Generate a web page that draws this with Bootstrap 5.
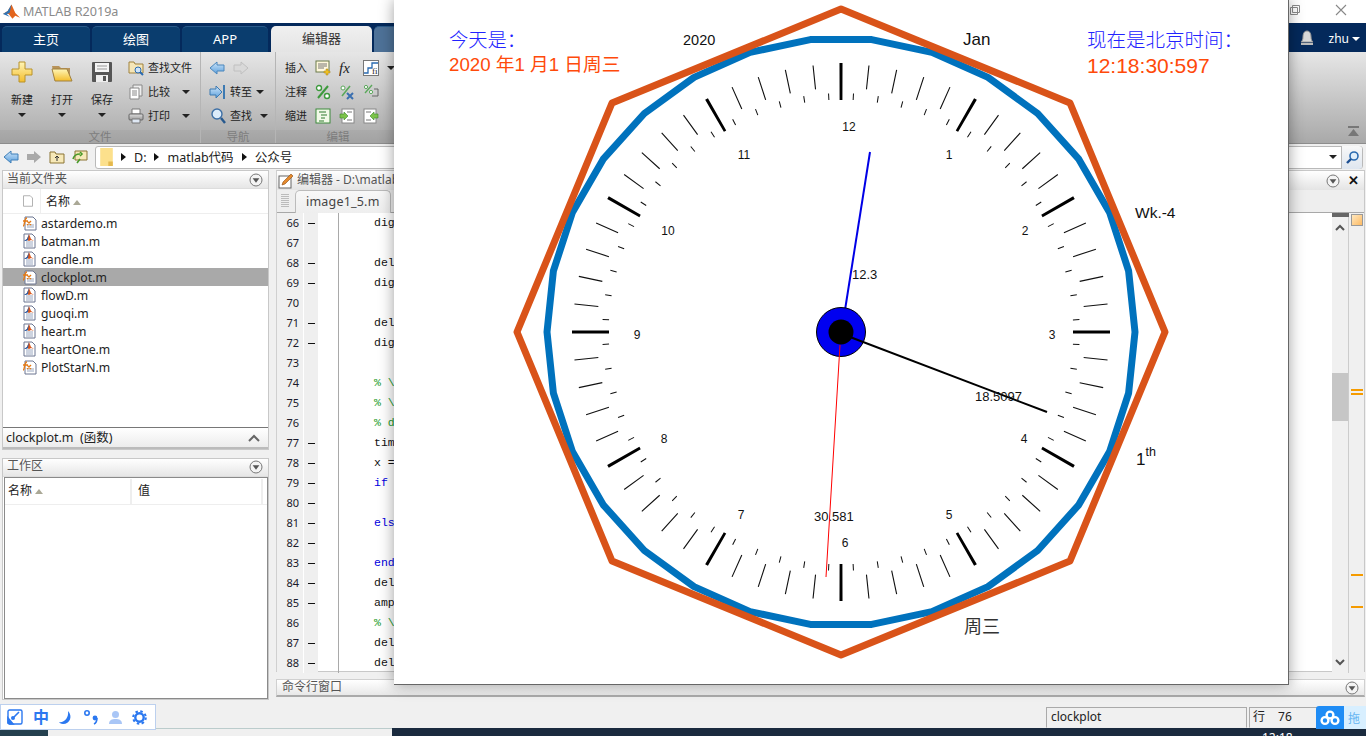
<!DOCTYPE html>
<html lang="zh-CN">
<head>
<meta charset="utf-8">
<title>MATLAB R2019a</title>
<link href="https://cdn.jsdelivr.net/npm/bootstrap@5.3.0/dist/css/bootstrap.min.css" rel="stylesheet">
<style>
html,body{margin:0;height:736px;overflow:hidden;background:#f0f0f0}
body{font-family:"Noto Sans","Noto Sans CJK SC",sans-serif;font-size:12px;color:#222;line-height:1.2}
.shell{width:1366px;height:736px;overflow:hidden;position:relative}
.ttl{height:23px;background:#fff;color:#8a8a8a;font-size:12.6px;padding-left:2px}
.ttl svg{margin-right:2px}
.ctl-a{position:absolute;left:1289px;top:3px}
.ctl-b{position:absolute;left:1334px;top:3px}
.tabbar{height:29px;background:#04295b;padding:3px 0 0 2px;gap:2px;color:#fff;font-size:13px}
.tb{width:88px;height:26px;background:#0a3d6e;border-radius:5px 5px 0 0;border-top:1px solid #2a5b8a}
.tb-w{width:86px}
.tb-on{width:101px;margin-left:1px;background:linear-gradient(#f0f0f0,#e4e4e4);color:#333;border:0}
.tb-x{width:120px;background:#4e7298}
.tab-sp{flex:1}
.srchend{width:6px;height:24px;background:#fff;border-radius:0 3px 3px 0;margin-right:9px}
.bell{margin-right:13px}
.usr{margin-right:6px;font-size:12px}
.tri{display:inline-block;width:0;height:0;border-left:4px solid transparent;border-right:4px solid transparent;border-top:4px solid #222}
.tri-w{border-top-color:#fff;margin-left:3px;vertical-align:2px}
.ribbon{height:92px;background:linear-gradient(#e6e6e6,#a9a9a9);border-bottom:1px solid #8d8d8d;position:relative}
.grp{border-right:1px solid #b5b5b5}
.g1{width:201px}.g2{width:75px}.g3{flex:1}
.rb-body{height:78px;padding-top:4px}
.rb-lbl{height:13px;line-height:13px;text-align:center;color:#7d7d7d;font-size:11.5px;background:rgba(0,0,0,.035)}
.g3lbl{width:124px}
.rb-min{position:absolute;left:1348px;top:74px}
.bigb{width:40px;font-size:11px}
.bigb svg{margin-top:5px}
.bigb span.t{margin-top:9px;height:16px;line-height:16px}
.bigb .tri{margin-top:5px}
.bigs{padding-left:2px}
.smc{margin-left:6px}
.rw{height:24px;gap:4px;font-size:11px;white-space:nowrap}
.rw .tri{margin-left:8px}
.g2 .rb-body{padding-left:8px}
.gap8{gap:8px}
.rw-n .tri{margin-left:0}
.rw-f .tri{margin-left:4px}
.ind2{margin-left:2px}
.g3 .rb-body{padding-left:9px}
.g3 .rw{gap:0}
.g3 .rw .tri{margin-left:0}
.g3 .lab{width:30px}
.g3 .ic{width:24px;display:flex}
.pathb{height:26px;background:#f0f0f0;padding:0 3px;gap:7px}
.pbox{flex:1;height:23px;background:#fff;border:1px solid #b9b9b9;border-radius:3px;font-size:12.5px;padding-left:4px;gap:8px}
.pbox .arr{width:0;height:0;border-top:4px solid transparent;border-bottom:4px solid transparent;border-left:5px solid #111}
.psp{flex:1}
.pdrop{margin-right:-4px}
.psrch{width:21px;height:23px;background:linear-gradient(#f8f8f8,#dfe6ef);border-left:1px solid #b9b9b9;border-radius:0 3px 3px 0}
.mainw{height:530px;gap:6px}
.leftc{width:270px;padding-left:2px;gap:8px;flex-shrink:0}
.rightc{width:1090px}
.pan{border:1px solid #c8c8c8;background:#fff;width:267px}
.p1{height:280px}.p2{height:242px}
.phead{height:18px;background:linear-gradient(#fff,#e6e6e6);font-size:12px;color:#555;padding:0 5px 0 4px;border-bottom:1px solid #ddd}
.p2 .phead{padding-bottom:2px}
.circ{margin-left:auto}
.colh{height:25px;border-bottom:1px solid #eee}
.colic{width:38px;height:24px;padding-left:19px;border-right:1px solid #eee;display:flex;align-items:center}
.colt{padding:2px 0 0 5px;font-size:12px;color:#222;gap:3px}
.up{display:inline-block;width:0;height:0;border-left:4px solid transparent;border-right:4px solid transparent;border-bottom:5px solid #aaa896}
.frow{height:18px;padding:3px 0 0 18px;gap:4px;font-size:12.2px;color:#222}
.frow svg{flex-shrink:0;margin-top:-3px}
.frow-on{background:#a9a9a9}
.fgrow{flex:1}
.pfn{height:22px;border-top:1px solid #777;background:linear-gradient(#fff,#ececec);border-bottom:2px solid #bbb;padding:0 8px 0 3px;font-size:12.5px}
.wk{flex:1;border:1px solid #8a8a8a;margin:0 0 0 1px}
.wkh{height:27px;border-bottom:1px solid #eee;padding-top:1px}
.wk1{width:127px;padding-left:3px;gap:3px;border-right:2px solid #eee}
.wk2{width:131px;padding-left:6px;border-right:2px solid #eee}
.edit{height:502px;border:1px solid #c8c8c8;border-left:1px solid #d0d0d0;background:#fff;margin-right:1px}
.ehead{height:19px;background:linear-gradient(#fff,#e4e4e4);padding:0 5px 0 1px;gap:3px;color:#555;font-size:12px}
.xx{font-weight:700;font-size:13px;color:#111;margin-left:5px;line-height:1}
.etabs{height:23px;background:#eee;border-bottom:1px solid #a8a8a8;padding-left:4px}
.grip{width:8px;height:14px;margin-right:6px;background:repeating-linear-gradient(#bbb 0 1px,transparent 1px 2px)}
.etab{height:23px;width:96px;padding-left:10px;background:linear-gradient(#f8f8f8,#eee);border:1px solid #bbb;border-bottom:0;border-radius:5px 5px 0 0;font-size:12.5px;color:#444;letter-spacing:.2px}
.ebody{height:460px}
.lines{width:1055px;flex-shrink:0}
.ln{height:20px;line-height:20px}
.lnum{width:27px;text-align:right;padding-right:4px;background:#f0f0f0;font-size:11px;color:#1a1a2a;border-right:1px solid #fff}
.ldash{width:14px;background:#efefef;position:relative}
.ldash i{display:block;width:7px;height:1px;background:#111;margin:10px 0 0 4px}
.lfold{width:21px;border-right:1px solid #a9a9a9}
.lcode{padding-left:35px;font-family:"Liberation Mono",monospace;font-size:11.5px;color:#111;white-space:pre}
.kw{color:#0000e0}.cm{color:#1c9c2c}
.scr{width:17px;background:#f0f0f0;border-right:1px solid #ccc;display:flex;flex-direction:column;align-items:center}
.scr-top{width:17px;height:4px;background:#666}
.chev{margin-top:7px}
.thumb{width:16px;height:48px;background:#c6c6c6;margin-top:142px}
.chev2{margin-top:238px}
.ovw{width:16px;background:#f0f0f0;padding:0 1px 0 2px}
.osq{height:12px;border:1px solid #999;background:linear-gradient(135deg,#ffe8bf,#fdba63);margin-top:1px}
.omk{height:2px;background:#f59b00}
.om1{margin-top:163px}.om2{margin-top:2px}.om3{margin-top:179px}.om4{margin-top:30px}
.cmdw{height:18px;margin:7px 1px 0 0;border:1px solid #d0d0d0;border-bottom:2px solid #aaa;background:linear-gradient(#fff,#e8e8e8);padding:0 5px;color:#555;font-size:12px}
.stat{height:28px;background:#f0f0f0;gap:2px;padding:7px 0 0 1046px}
.sb1{width:201px;height:21px;border:1px solid #aaa;border-bottom:1px solid #eee;padding-left:4px;font-size:12px;background:#f0f0f0}
.sb2{width:70px;height:21px;border:1px solid #aaa;border-bottom:1px solid #eee;padding-left:3px;gap:13px;font-size:12px}
.task{height:8px;background:#1a2a3e;overflow:hidden}
.t1{width:48px;background:#24404e}
.t2{width:344px;background:#f0f0f0;border-top:1px solid #bcc}
.t3{flex:1;position:relative;color:#fff;font-size:12px}
.clk{position:absolute;left:870px;top:4px;line-height:12px}
.sogou{position:absolute;left:0;top:704px;width:156px;height:26px;background:#fff;border:1px solid #bcd0ee;color:#2b78f0;padding-left:6px;gap:9px}
.sogou b{font-size:16px;width:18px;text-align:center;line-height:1}
.bdy{position:absolute;left:1316px;top:706px;width:50px;height:23px;background:linear-gradient(90deg,#1f8cf5 0 28px,#d8efff 28px);border-radius:3px 0 0 0;padding-left:4px;overflow:hidden;color:#63b4f2;font-size:12px;gap:8px}
.bdy span{padding-top:3px}
.figw{position:absolute;left:394px;top:0;width:895px;height:685px;background:#fff;border-right:1px solid #666;border-bottom:1px solid #666;box-shadow:0 0 14px rgba(0,0,0,.38)}
.figw svg{display:block}
.cn{font-family:"Noto Sans CJK SC","Liberation Sans",sans-serif}
.fg{font-family:"Liberation Sans","Noto Sans CJK SC",sans-serif;fill:#111}
</style>
</head>
<body>
<svg width="0" height="0" class="position-absolute">
<defs>
<linearGradient id="yl" x1="0" y1="0" x2="0" y2="1"><stop offset="0" stop-color="#fff6b8"/><stop offset="1" stop-color="#f4bd2c"/></linearGradient>
<linearGradient id="bl" x1="0" y1="0" x2="0" y2="1"><stop offset="0" stop-color="#cfe6fa"/><stop offset="1" stop-color="#5b9fdc"/></linearGradient>
<linearGradient id="gy" x1="0" y1="0" x2="0" y2="1"><stop offset="0" stop-color="#ddd"/><stop offset="1" stop-color="#999"/></linearGradient>
<symbol id="mfile" viewBox="0 0 16 16"><path d="M3 1h8l3 3v11H3z" fill="#fff" stroke="#6a7590"/><path d="M5 9h7M5 11h7M5 13h7" stroke="#9aa7c0"/><path d="M3 8l3-2 2-5 2 5 3 2-3-1-2 1-2-1z" fill="#d9561a"/><path d="M3 8l3-2 2-5-1 6-2 1z" fill="#1f5fb0"/></symbol>
<symbol id="ffile" viewBox="0 0 16 16"><path d="M4 2h8l3 3v10H4z" fill="#fff" stroke="#6a7590"/><path d="M6 10h7M6 12h7" stroke="#9aa7c0"/><path d="M2 11c2 0 1-8 4-8M2 6h5M6 6l4 4M10 6l-4 4" fill="none" stroke="#e47a16" stroke-width="1.4"/></symbol>
<symbol id="circ" viewBox="0 0 14 14"><circle cx="7" cy="7" r="6" fill="#f4f4f4" stroke="#777"/><path d="M3.6 5.2h6.800L7 9.800z" fill="#555"/></symbol>
<symbol id="ldoc" viewBox="0 0 16 16"><path d="M2 1h9l3 3v11H2z" fill="#fff" stroke="#999"/></symbol>
</defs>
</svg>

<div class="shell d-flex flex-column">
  <div class="ttl d-flex align-items-center">
    <svg width="19" height="18" viewBox="0 0 20 18"><path d="M1 11l5-3 4-7 4 9 5 5-5-2-3 3-4-5z" fill="#e3641c"/><path d="M1 11l5-3 4-7-2 9-3 1 3 3z" fill="#2f74b5"/></svg>
    MATLAB R2019a
  </div>
  <div class="tabbar d-flex align-items-end">
    <div class="tb d-flex align-items-center justify-content-center">主页</div>
    <div class="tb d-flex align-items-center justify-content-center">绘图</div>
    <div class="tb tb-w d-flex align-items-center justify-content-center">APP</div>
    <div class="tb tb-on d-flex align-items-center justify-content-center">编辑器</div>
    <div class="tb tb-x"></div>
    <div class="tab-sp"></div>
    <div class="srchend align-self-center"></div>
    <svg class="bell align-self-center" width="14" height="18" viewBox="0 0 14 18"><path d="M7 1c3 0 4 3 4 6s1 4 2 5H1c1-1 2-2 2-5s1-6 4-6z" fill="#d9d9d9" stroke="#999"/><rect x="1" y="13" width="12" height="2" fill="#bbb"/></svg>
    <div class="usr align-self-center">zhu<span class="tri tri-w"></span></div>
  </div>
  <div class="ribbon d-flex flex-shrink-0">
    <div class="grp g1">
      <div class="rb-body d-flex bigs">
        <div class="bigb d-flex flex-column align-items-center">
          <svg width="22" height="22" viewBox="0 0 22 22"><path d="M8 1h6v7h7v6h-7v7H8v-7H1V8h7z" fill="url(#yl)" stroke="#b8922a"/></svg>
          <span class="t">新建</span><span class="tri"></span>
        </div>
        <div class="bigb d-flex flex-column align-items-center">
          <svg width="22" height="22" viewBox="0 0 22 22"><path d="M1 5h7l2 2h9v13H4z" fill="#b8935a"/><path d="M1 8h15l5 12H4z" fill="url(#yl)" stroke="#a08040"/></svg>
          <span class="t">打开</span><span class="tri"></span>
        </div>
        <div class="bigb d-flex flex-column align-items-center">
          <svg width="22" height="22" viewBox="0 0 22 22"><rect x="1" y="1" width="20" height="20" rx="1" fill="#555"/><rect x="4" y="2" width="14" height="9" fill="#f4f4f4"/><path d="M6 5h10M6 8h10" stroke="#999"/><rect x="5" y="14" width="12" height="7" fill="#eee"/><rect x="12" y="15" width="3" height="5" fill="#555"/></svg>
          <span class="t">保存</span><span class="tri"></span>
        </div>
        <div class="smc">
          <div class="rw d-flex align-items-center"><svg width="16" height="16" viewBox="0 0 16 16"><path d="M1 2h5l1 2h8v9H1z" fill="#f5e6b8" stroke="#a0823c"/><circle cx="10" cy="10" r="3" fill="#cfe4f8" stroke="#2a6ab0"/><path d="M12 12l3 3" stroke="#2a6ab0" stroke-width="2"/></svg>查找文件</div>
          <div class="rw d-flex align-items-center"><svg width="16" height="16" viewBox="0 0 16 16"><path d="M5 1h9v11H5z" fill="#eee" stroke="#888"/><path d="M2 4h9v11H2z" fill="#fff" stroke="#888"/><path d="M4 7h5M4 9h5M4 11h5" stroke="#888"/></svg>比较<span class="tri"></span></div>
          <div class="rw d-flex align-items-center"><svg width="16" height="16" viewBox="0 0 16 16"><path d="M4 1h8v5H4z" fill="#fff" stroke="#777"/><rect x="1" y="6" width="14" height="6" rx="1" fill="url(#gy)" stroke="#666"/><path d="M4 11h8v4H4z" fill="#dfe8f4" stroke="#777"/></svg>打印<span class="tri"></span></div>
        </div>
      </div>
      <div class="rb-lbl">文件</div>
    </div>
    <div class="grp g2">
      <div class="rb-body">
        <div class="rw gap8 d-flex align-items-center">
          <svg width="16" height="14" viewBox="0 0 16 14"><path d="M1 7l7-6v3h7v6H8v3z" fill="url(#bl)" stroke="#4a86bc"/></svg>
          <svg width="16" height="14" viewBox="0 0 16 14"><path d="M15 7L8 1v3H1v6h7v3z" fill="#d9d9d9" stroke="#c0c0c0"/></svg>
        </div>
        <div class="rw rw-n d-flex align-items-center"><svg width="17" height="16" viewBox="0 0 17 16"><path d="M1 5h6V2l6 6-6 6v-3H1z" fill="url(#bl)" stroke="#3d7ab2"/><path d="M15 1v14" stroke="#3d7ab2" stroke-width="2"/></svg>转至<span class="tri"></span></div>
        <div class="rw rw-f d-flex align-items-center"><svg class="ind2" width="15" height="16" viewBox="0 0 15 16"><circle cx="6" cy="6" r="5" fill="#dcecfa" stroke="#3d6fa5" stroke-width="1.4"/><path d="M10 10l4 5" stroke="#27598e" stroke-width="2.400"/></svg>查找<span class="tri"></span></div>
      </div>
      <div class="rb-lbl">导航</div>
    </div>
    <div class="g3">
      <div class="rb-body">
        <div class="rw d-flex align-items-center"><span class="lab">插入</span>
          <span class="ic"><svg width="16" height="16" viewBox="0 0 16 16"><rect x="1" y="1" width="13" height="11" fill="#fff8dc" stroke="#6b7a4a"/><path d="M3 4h9M3 6h9M3 8h6" stroke="#777"/><path d="M11 9h2v2h2v2h-2v2h-2v-2H9v-2h2z" fill="#f0c020" stroke="#a08020" stroke-width=".5"/></svg></span>
          <span class="ic"><svg width="16" height="16" viewBox="0 0 16 16"><text x="0" y="13" font-family="Liberation Serif,serif" font-style="italic" font-size="15" fill="#222">fx</text></svg></span>
          <span class="ic"><svg width="16" height="16" viewBox="0 0 16 16"><rect x=".5" y=".5" width="15" height="15" fill="#fff" stroke="#777"/><path d="M1 13h4V8h4V3h6" fill="none" stroke="#2a6ab0" stroke-width="1.3"/><text x="9" y="14" font-family="Liberation Serif,serif" font-size="9" fill="#222">fi</text></svg></span>
          <span class="tri"></span></div>
        <div class="rw d-flex align-items-center"><span class="lab">注释</span>
          <span class="ic"><svg width="16" height="16" viewBox="0 0 16 16"><path d="M3 14L13 2" stroke="#3d9a3d" stroke-width="2"/><circle cx="4" cy="4" r="2.500" fill="#fff" stroke="#3d9a3d" stroke-width="1.4"/><circle cx="12" cy="12" r="2.500" fill="#fff" stroke="#3d9a3d" stroke-width="1.4"/></svg></span>
          <span class="ic"><svg width="16" height="16" viewBox="0 0 16 16"><path d="M3 12L11 2" stroke="#5aa85a" stroke-width="1.6"/><circle cx="4" cy="4" r="2" fill="#fff" stroke="#5aa85a"/><path d="M8 9l6 6M14 9l-6 6" stroke="#3a6fb0" stroke-width="2"/></svg></span>
          <span class="ic"><svg width="16" height="16" viewBox="0 0 16 16"><path d="M2 9L9 1" stroke="#5aa85a" stroke-width="1.4"/><circle cx="3" cy="3" r="1.600" fill="#fff" stroke="#5aa85a"/><circle cx="8" cy="8" r="1.600" fill="#fff" stroke="#5aa85a"/><path d="M11 5h4v7H9" fill="none" stroke="#666"/></svg></span></div>
        <div class="rw d-flex align-items-center"><span class="lab">缩进</span>
          <span class="ic"><svg width="16" height="16" viewBox="0 0 16 16"><rect x="1" y="1" width="14" height="14" fill="#f2fae8" stroke="#3d8a3d"/><path d="M4 4h7M6 7h6M6 10h4M4 13h5" stroke="#2e7a2e"/></svg></span>
          <span class="ic"><svg width="16" height="16" viewBox="0 0 16 16"><rect x="3" y="1" width="12" height="14" fill="#fff" stroke="#888"/><path d="M8 4h5M8 12h5" stroke="#777"/><path d="M1 6h4V4l4 4-4 4v-2H1z" fill="#7cc24a" stroke="#3d8a2a" stroke-width=".6"/></svg></span>
          <span class="ic"><svg width="16" height="16" viewBox="0 0 16 16"><rect x="1" y="1" width="12" height="14" fill="#fff" stroke="#888"/><path d="M3 4h5M3 12h5" stroke="#777"/><path d="M15 6h-4V4L7 8l4 4v-2h4z" fill="#7cc24a" stroke="#3d8a2a" stroke-width=".6"/></svg></span></div>
      </div>
      <div class="rb-lbl g3lbl">编辑</div>
    </div>
    <svg class="rb-min" width="11" height="11" viewBox="0 0 11 11"><path d="M0 1h11" stroke="#777" stroke-width="2"/><path d="M5.500 3L11 10H0z" fill="#777"/></svg>
  </div>
  <div class="pathb d-flex align-items-center flex-shrink-0">
    <svg width="16" height="14" viewBox="0 0 16 14"><path d="M1 7l7-6v3h7v6H8v3z" fill="url(#bl)" stroke="#3f7fb8"/></svg>
    <svg width="16" height="14" viewBox="0 0 16 14"><path d="M15 7L8 1v3H1v6h7v3z" fill="#a9a9a9"/></svg>
    <svg width="16" height="14" viewBox="0 0 16 14"><path d="M1 2h5l1 2h8v9H1z" fill="#f7e9b8" stroke="#8b7434"/><path d="M8 11V6M6 8l2-2 2 2" stroke="#333" fill="none"/></svg>
    <svg width="16" height="14" viewBox="0 0 16 14"><path d="M3 1h12v9H3z" fill="#f7e9b8" stroke="#8b7434"/><path d="M1 9c1-4 4-5 7-5M8 2l2 2-2 2M5 13l3-4" stroke="#4a9a2a" stroke-width="1.6" fill="none"/></svg>
    <div class="pbox d-flex align-items-center">
      <svg width="13" height="18" viewBox="0 0 14 20"><path d="M0 0h14v20H0z" fill="#fce08c"/><path d="M9 15h5v5H9z" fill="#e5b94e"/></svg>
      <span class="arr"></span><span>D:</span><span class="arr"></span><span>matlab代码</span><span class="arr"></span><span>公众号</span>
      <span class="psp"></span>
      <span class="tri pdrop"></span>
      <span class="psrch d-flex align-items-center justify-content-center"><svg width="15" height="15" viewBox="0 0 15 15"><circle cx="9" cy="6" r="4" fill="#e0eefa" stroke="#2a6ab0" stroke-width="1.6"/><path d="M6 9l-4 4" stroke="#1d4f92" stroke-width="2.400"/></svg></span>
    </div>
  </div>
  <div class="mainw d-flex flex-shrink-0">
    <div class="leftc d-flex flex-column">
      <div class="pan p1 d-flex flex-column">
        <div class="phead d-flex align-items-center">当前文件夹<svg class="circ" width="14" height="14"><use href="#circ"/></svg></div>
        <div class="colh d-flex">
          <div class="colic"><svg width="12" height="14"><use href="#ldoc"/></svg></div>
          <div class="colt d-flex align-items-center">名称 <span class="up"></span></div>
        </div>
        <div class="frow d-flex align-items-center"><svg width="16" height="16"><use href="#ffile"/></svg>astardemo.m</div>
        <div class="frow d-flex align-items-center"><svg width="16" height="16"><use href="#mfile"/></svg>batman.m</div>
        <div class="frow d-flex align-items-center"><svg width="16" height="16"><use href="#mfile"/></svg>candle.m</div>
        <div class="frow frow-on d-flex align-items-center"><svg width="16" height="16"><use href="#ffile"/></svg>clockplot.m</div>
        <div class="frow d-flex align-items-center"><svg width="16" height="16"><use href="#mfile"/></svg>flowD.m</div>
        <div class="frow d-flex align-items-center"><svg width="16" height="16"><use href="#mfile"/></svg>guoqi.m</div>
        <div class="frow d-flex align-items-center"><svg width="16" height="16"><use href="#mfile"/></svg>heart.m</div>
        <div class="frow d-flex align-items-center"><svg width="16" height="16"><use href="#mfile"/></svg>heartOne.m</div>
        <div class="frow d-flex align-items-center"><svg width="16" height="16"><use href="#ffile"/></svg>PlotStarN.m</div>
        <div class="fgrow"></div>
        <div class="pfn d-flex align-items-center justify-content-between">clockplot.m&nbsp;&nbsp;(函数)
          <svg width="12" height="8" viewBox="0 0 12 8"><path d="M1 7l5-5 5 5" fill="none" stroke="#666" stroke-width="2"/></svg></div>
      </div>
      <div class="pan p2 d-flex flex-column">
        <div class="phead d-flex align-items-center">工作区<svg class="circ" width="14" height="14"><use href="#circ"/></svg></div>
        <div class="wk">
          <div class="wkh d-flex">
            <div class="wk1 d-flex align-items-center">名称 <span class="up"></span></div>
            <div class="wk2 d-flex align-items-center">值</div>
          </div>
        </div>
      </div>
    </div>
    <div class="rightc">
      <div class="edit">
        <div class="ehead d-flex align-items-center">
          <svg width="16" height="16" viewBox="0 0 16 16"><rect x="1" y="3" width="12" height="12" fill="#fff" stroke="#666"/><path d="M4 12l1-3 8-8 2 2-8 8z" fill="#e58a2c" stroke="#8a4a12" stroke-width=".6"/></svg>
          编辑器 - D:\matlab
          <svg class="circ" width="14" height="14"><use href="#circ"/></svg><span class="xx">✕</span>
        </div>
        <div class="etabs d-flex align-items-center"><div class="grip"></div><div class="etab d-flex align-items-center">image1_5.m</div></div>
        <div class="ebody d-flex">
          <div class="lines">
            <div class="ln d-flex"><div class="lnum">66</div><div class="ldash"><i></i></div><div class="lfold"></div><div class="lcode">dig</div></div>
            <div class="ln d-flex"><div class="lnum">67</div><div class="ldash"></div><div class="lfold"></div><div class="lcode"></div></div>
            <div class="ln d-flex"><div class="lnum">68</div><div class="ldash"><i></i></div><div class="lfold"></div><div class="lcode">del</div></div>
            <div class="ln d-flex"><div class="lnum">69</div><div class="ldash"><i></i></div><div class="lfold"></div><div class="lcode">dig</div></div>
            <div class="ln d-flex"><div class="lnum">70</div><div class="ldash"></div><div class="lfold"></div><div class="lcode"></div></div>
            <div class="ln d-flex"><div class="lnum">71</div><div class="ldash"><i></i></div><div class="lfold"></div><div class="lcode">del</div></div>
            <div class="ln d-flex"><div class="lnum">72</div><div class="ldash"><i></i></div><div class="lfold"></div><div class="lcode">dig</div></div>
            <div class="ln d-flex"><div class="lnum">73</div><div class="ldash"></div><div class="lfold"></div><div class="lcode"></div></div>
            <div class="ln d-flex"><div class="lnum">74</div><div class="ldash"></div><div class="lfold"></div><div class="lcode cm">% \</div></div>
            <div class="ln d-flex"><div class="lnum">75</div><div class="ldash"></div><div class="lfold"></div><div class="lcode cm">% \</div></div>
            <div class="ln d-flex"><div class="lnum">76</div><div class="ldash"></div><div class="lfold"></div><div class="lcode cm">% d</div></div>
            <div class="ln d-flex"><div class="lnum">77</div><div class="ldash"><i></i></div><div class="lfold"></div><div class="lcode">tim</div></div>
            <div class="ln d-flex"><div class="lnum">78</div><div class="ldash"><i></i></div><div class="lfold"></div><div class="lcode">x =</div></div>
            <div class="ln d-flex"><div class="lnum">79</div><div class="ldash"><i></i></div><div class="lfold"></div><div class="lcode kw">if</div></div>
            <div class="ln d-flex"><div class="lnum">80</div><div class="ldash"><i></i></div><div class="lfold"></div><div class="lcode"></div></div>
            <div class="ln d-flex"><div class="lnum">81</div><div class="ldash"><i></i></div><div class="lfold"></div><div class="lcode kw">els</div></div>
            <div class="ln d-flex"><div class="lnum">82</div><div class="ldash"><i></i></div><div class="lfold"></div><div class="lcode"></div></div>
            <div class="ln d-flex"><div class="lnum">83</div><div class="ldash"><i></i></div><div class="lfold"></div><div class="lcode kw">end</div></div>
            <div class="ln d-flex"><div class="lnum">84</div><div class="ldash"><i></i></div><div class="lfold"></div><div class="lcode">del</div></div>
            <div class="ln d-flex"><div class="lnum">85</div><div class="ldash"><i></i></div><div class="lfold"></div><div class="lcode">amp</div></div>
            <div class="ln d-flex"><div class="lnum">86</div><div class="ldash"></div><div class="lfold"></div><div class="lcode cm">% \</div></div>
            <div class="ln d-flex"><div class="lnum">87</div><div class="ldash"><i></i></div><div class="lfold"></div><div class="lcode">del</div></div>
            <div class="ln d-flex"><div class="lnum">88</div><div class="ldash"><i></i></div><div class="lfold"></div><div class="lcode">del</div></div>
          </div>
          <div class="scr">
            <div class="scr-top"></div>
            <svg class="chev" width="10" height="7" viewBox="0 0 10 7"><path d="M1 6l4-4 4 4" fill="none" stroke="#555" stroke-width="2"/></svg>
            <div class="thumb"></div>
            <svg class="chev2" width="10" height="7" viewBox="0 0 10 7"><path d="M1 1l4 4 4-4" fill="none" stroke="#555" stroke-width="2"/></svg>
          </div>
          <div class="ovw">
            <div class="osq"></div>
            <div class="omk om1"></div><div class="omk om2"></div><div class="omk om3"></div><div class="omk om4"></div>
          </div>
        </div>
      </div>
      <div class="cmdw d-flex align-items-center">命令行窗口<svg class="circ" width="14" height="14"><use href="#circ"/></svg></div>
    </div>
  </div>
  <div class="stat d-flex flex-shrink-0">
    <div class="sb1 d-flex align-items-center">clockplot</div>
    <div class="sb2 d-flex align-items-center"><span>行</span><span>76</span></div>
  </div>
  <div class="task d-flex flex-shrink-0">
    <div class="t1"></div><div class="t2"></div><div class="t3"><span class="clk">12:18</span></div>
  </div>
</div>

<svg class="ctl-a" width="12" height="14" viewBox="0 0 12 14"><path d="M3.500 2.500h7v7h-7zM1.500 4.500h7v7h-7z" fill="#fff" stroke="#8a8a8a"/></svg>
<svg class="ctl-b" width="14" height="14" viewBox="0 0 14 14"><path d="M2 2l10 10M12 2L2 12" stroke="#888" stroke-width="1.1"/></svg>

<div class="sogou d-flex align-items-center">
  <svg width="16" height="16" viewBox="0 0 16 16"><rect x="1" y="1" width="14" height="14" rx="1.500" fill="#fff" stroke="#2b78f0" stroke-width="1.4"/><path d="M1 9l5 6H3l-2-1zM7 8l5-5" stroke="#2b78f0" stroke-width="1.6" fill="#2b78f0"/><circle cx="6" cy="9" r="2" fill="#2b78f0"/></svg>
  <b>中</b>
  <svg width="15" height="15" viewBox="0 0 15 15"><path d="M9 1c5 5 2 13-5 13-2 0-3-1-4-2 5 1 10-4 9-11z" fill="#2b78f0"/></svg>
  <svg width="16" height="16" viewBox="0 0 16 16"><circle cx="4" cy="4" r="2.200" fill="none" stroke="#2b78f0" stroke-width="1.6"/><circle cx="12" cy="9" r="2.400" fill="#2b78f0"/><path d="M14 9c0 3-1 5-3 6" stroke="#2b78f0" stroke-width="1.6" fill="none"/></svg>
  <svg width="15" height="15" viewBox="0 0 15 15"><circle cx="7.500" cy="4.500" r="3.500" fill="#a9c6f6"/><path d="M1 14c0-4 3-5 6.500-5s6.500 1 6.500 5z" fill="#a9c6f6"/></svg>
  <svg width="15" height="15" viewBox="0 0 15 15"><circle cx="7.500" cy="7.500" r="4.200" fill="none" stroke="#2b78f0" stroke-width="2.400"/><circle cx="7.500" cy="7.500" r="6.300" fill="none" stroke="#2b78f0" stroke-width="2" stroke-dasharray="2.500 2.450"/></svg>
</div>
<div class="bdy d-flex align-items-center">
  <svg width="20" height="16" viewBox="0 0 20 16"><g fill="none" stroke="#fff" stroke-width="2.400"><circle cx="10" cy="5" r="3.400"/><circle cx="5" cy="10.500" r="3.400"/><circle cx="15" cy="10.500" r="3.400"/></g></svg>
  <span>拖</span>
</div>

<div class="figw">
<svg width="894" height="684" viewBox="394 0 894 684">
  <polygon points="810.300,39.600 871.700,39.600 931.900,52.400 988,77.400 1037.700,113.500 1078.800,159.200 1109.600,212.400 1128.600,270.900 1135,332 1128.600,393.100 1109.600,451.600 1078.800,504.800 1037.700,550.500 988,586.600 931.900,611.600 871.700,624.400 810.300,624.400 750.100,611.600 694,586.600 644.300,550.500 603.200,504.800 572.400,451.600 553.400,393.100 547,332 553.400,270.900 572.400,212.400 603.200,159.200 644.300,113.500 694,77.400 750.100,52.400" fill="none" stroke="#0072bd" stroke-width="7" stroke-linejoin="round"/>
  <polygon points="841,9 1070,103 1165,332 1070,561 841,655 612,561 517,332 612,103" fill="none" stroke="#d95319" stroke-width="7" stroke-linejoin="round"/>

  <circle cx="841" cy="332" r="256" fill="none" stroke="#111" stroke-width="24" pathLength="360" stroke-dasharray="0.25 5.75" stroke-dashoffset="0.125"/>
  <circle cx="841" cy="332" r="235.500" fill="none" stroke="#111" stroke-width="6.500" pathLength="360" stroke-dasharray="0.25 5.75" stroke-dashoffset="0.125" transform="rotate(3 841 332)"/>
  <circle cx="841" cy="332" r="250.500" fill="none" stroke="#000" stroke-width="37" pathLength="360" stroke-dasharray="0.68 29.32" stroke-dashoffset="0.34"/>

  <g class="fg" font-size="12" text-anchor="middle">
    <text x="849" y="131">12</text><text x="949" y="159">1</text><text x="1025" y="235">2</text><text x="1052" y="339">3</text>
    <text x="1024" y="443">4</text><text x="949" y="519">5</text><text x="845" y="547">6</text><text x="741" y="519">7</text>
    <text x="664" y="443">8</text><text x="637" y="339">9</text><text x="668" y="235">10</text><text x="744" y="159">11</text>
  </g>

  <line x1="845" y1="310" x2="870" y2="152" stroke="#0000e6" stroke-width="2"/>
  <circle cx="841" cy="332" r="24.500" fill="#0000f0" stroke="#000"/>
  <line x1="850" y1="337" x2="1047" y2="412" stroke="#000" stroke-width="2"/>
  <line x1="840" y1="345" x2="826" y2="577" stroke="#f00" stroke-width="1"/>
  <circle cx="841" cy="332" r="12.500" fill="#000"/>

  <g class="fg" font-size="13">
    <text x="852" y="279">12.3</text>
    <text x="975" y="401">18.5097</text>
    <text x="814" y="521">30.581</text>
  </g>
  <g class="fg">
    <text x="683" y="45" font-size="14.500">2020</text>
    <text x="963" y="45" font-size="17">Jan</text>
    <text x="1135" y="218" font-size="15.500">Wk.-4</text>
    <text x="1136" y="465" font-size="17">1<tspan font-size="12.500" dy="-9">th</tspan></text>
    <text x="964" y="633" font-size="18" class="cn" fill="#333">周三</text>
  </g>
  <g class="cn" font-weight="300">
    <text x="449" y="47" font-size="19.300" fill="#2222ff">今天是：</text>
    <text x="1087" y="47" font-size="19.500" fill="#2222ff">现在是北京时间：</text>
  </g>
  <g font-family="'Liberation Sans','Noto Sans CJK SC',sans-serif" fill="#ff4a0a">
    <text x="449" y="71" font-size="18.700">2020 年1 月1 日周三</text>
    <text x="1087" y="73" font-size="21">12:18:30:597</text>
  </g>
</svg>
</div>
</body>
</html>
